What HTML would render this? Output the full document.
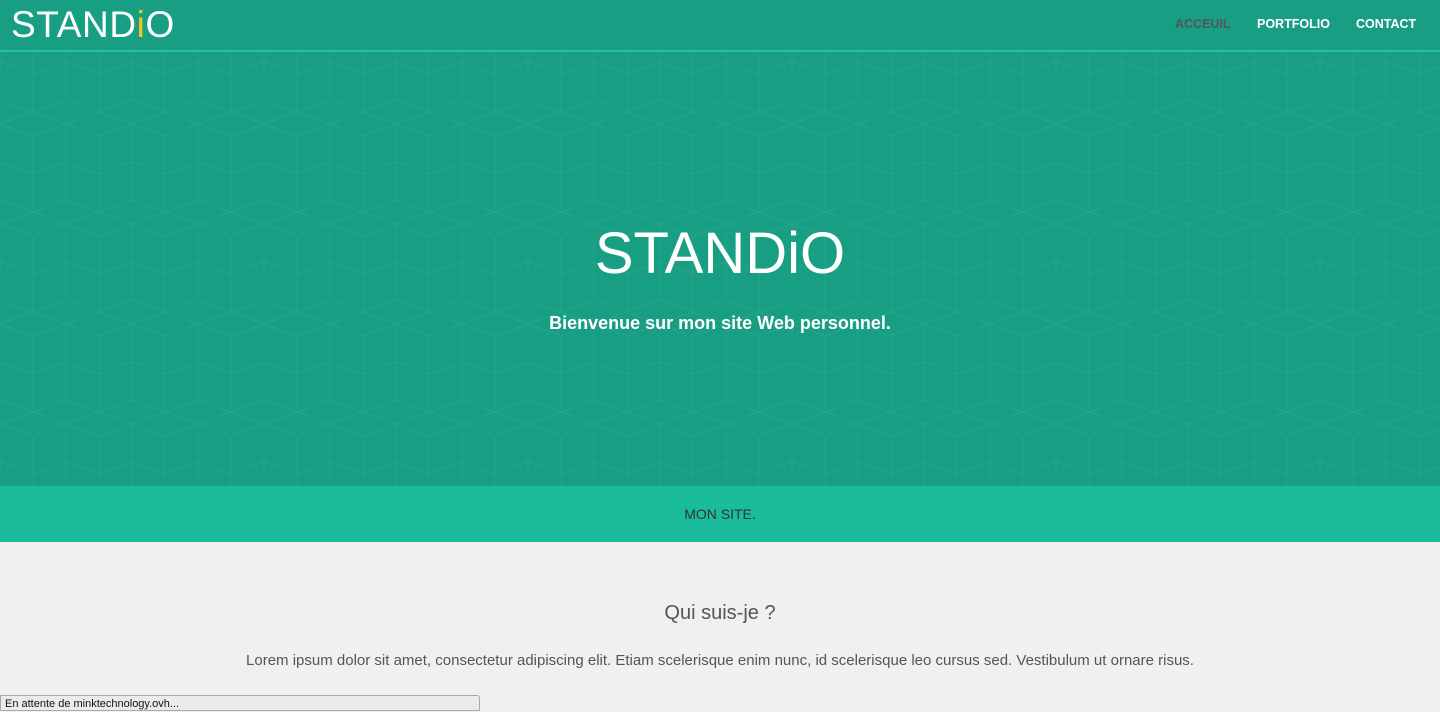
<!DOCTYPE html>
<html><head><meta charset="utf-8"><style>
*{margin:0;padding:0;box-sizing:border-box}
body{width:1440px;height:709px;overflow:hidden;background:#f0f0f0;font-family:"Liberation Sans",sans-serif;position:relative}
.hdr{position:absolute;left:0;top:0;width:1440px;height:52px;background:#189f83;border-bottom:2px solid #27c19f;z-index:2}
.logo{position:absolute;left:11px;top:5px;font-size:37px;color:#fff;letter-spacing:0.6px;line-height:40px}
.logo span{color:#f5c518}
.nav{position:absolute;top:17px;font-size:12.5px;font-weight:bold;color:#fff}
.hero{position:absolute;left:0;top:52px;width:1440px;height:434px;background:#189f83}
.hero svg{position:absolute;left:0;top:0}
.t1{position:absolute;left:0;width:1440px;top:167px;text-align:center;font-size:58px;color:#fff;line-height:70px}
.t2{position:absolute;left:0;width:1440px;top:261px;text-align:center;font-size:18px;font-weight:bold;color:#fff}
.band{position:absolute;left:0;top:486px;width:1440px;height:56px;background:#1abc9c;text-align:center;line-height:56px;font-size:14px;color:#333}
.h2{position:absolute;left:0;width:1440px;top:602px;text-align:center;font-size:20px;color:#555}
.p{position:absolute;left:0;width:1440px;top:652px;text-align:center;font-size:15px;color:#555}
.status{position:absolute;left:0;top:695px;width:480px;height:16px;background:#ebebeb;border:1px solid #aaa;border-radius:0 3px 0 0;font-size:11px;color:#111;padding-left:4px;line-height:16px}
</style></head><body>
<div class="hdr">
<div class="logo">STAND<span>i</span>O</div>
<div class="nav" style="left:1175px;color:#555">ACCEUIL</div>
<div class="nav" style="left:1257px">PORTFOLIO</div>
<div class="nav" style="left:1356px">CONTACT</div>
</div>
<div class="hero">
<svg width="1440" height="434"><defs><pattern id="c" width="66" height="100" patternUnits="userSpaceOnUse" x="0" y="-40">
<g fill="none" stroke="rgba(255,255,255,0.055)" stroke-width="1">
<path d="M33 0L66 12V50L33 62L0 50V12Z M0 12L33 24L66 12 M33 24V62 M33 62V100 M0 50L-33 62 M66 50L99 62 M0 88L33 100L66 88 M0 50V88 M66 50V88"/>
</g></pattern></defs><rect width="1440" height="434" fill="url(#c)"/></svg>
<div class="t1">STANDiO</div>
<div class="t2">Bienvenue sur mon site Web personnel.</div>
</div>
<div class="band">MON SITE.</div>
<div class="h2">Qui suis-je ?</div>
<div class="p">Lorem ipsum dolor sit amet, consectetur adipiscing elit. Etiam scelerisque enim nunc, id scelerisque leo cursus sed. Vestibulum ut ornare risus.</div>
<div class="status">En attente de minktechnology.ovh...</div>
</body></html>
